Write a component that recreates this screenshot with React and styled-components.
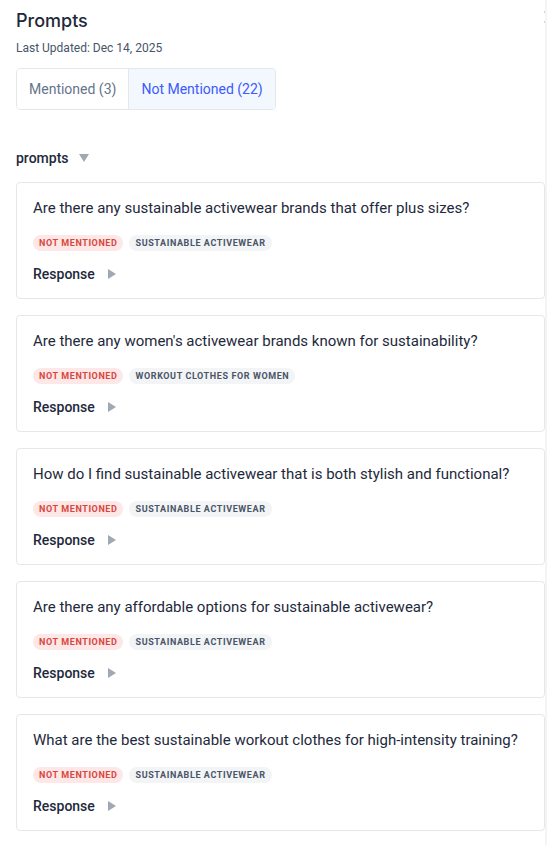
import React from 'react';
import styled, { createGlobalStyle } from 'styled-components';

const GlobalStyle = createGlobalStyle`
  html, body {
    margin: 0;
    padding: 0;
    background: #f4f4f5;
    font-family: Roboto, "Liberation Sans", Arial, sans-serif;
    -webkit-font-smoothing: antialiased;
  }
  * { box-sizing: border-box; }
`;

const prompts = [
  { question: 'Are there any sustainable activewear brands that offer plus sizes?', topic: 'Sustainable Activewear' },
  { question: "Are there any women's activewear brands known for sustainability?", topic: 'Workout Clothes for Women' },
  { question: 'How do I find sustainable activewear that is both stylish and functional?', topic: 'Sustainable Activewear' },
  { question: 'Are there any affordable options for sustainable activewear?', topic: 'Sustainable Activewear' },
  { question: 'What are the best sustainable workout clothes for high-intensity training?', topic: 'Sustainable Activewear' },
];

export default function App() {
  return (
    <>
      <GlobalStyle />
      <Panel>
        <Header>
          <Title>Prompts</Title>
          <Updated>Last Updated: Dec 14, 2025</Updated>
          <CloseButton aria-label="close">
            <svg width="14" height="14" viewBox="0 0 14 14" fill="none" stroke="#9ca3af" strokeWidth="1.5" strokeLinecap="round">
              <path d="M2 2l10 10M12 2L2 12" />
            </svg>
          </CloseButton>
        </Header>

        <Tabs>
          <Tab>Mentioned (3)</Tab>
          <Tab $active>Not Mentioned (22)</Tab>
        </Tabs>

        <GroupToggle>
          prompts
          <Caret viewBox="0 0 10 8">
            <path d="M0 0h10L5 8z" />
          </Caret>
        </GroupToggle>

        <List>
          {prompts.map((p) => (
            <Card key={p.question}>
              <Question>{p.question}</Question>
              <Tags>
                <Tag $variant="danger">Not Mentioned</Tag>
                <Tag>{p.topic}</Tag>
              </Tags>
              <ResponseToggle>
                Response
                <Caret viewBox="0 0 8 10" $small>
                  <path d="M0 0l8 5-8 5z" />
                </Caret>
              </ResponseToggle>
            </Card>
          ))}
        </List>
      </Panel>
    </>
  );
}

const Panel = styled.div`
  width: 545px;
  min-height: 845px;
  background: #ffffff;
  padding: 8px 0 13px 16px;
  overflow: hidden;
`;

const Header = styled.div`
  position: relative;
  display: flex;
  flex-direction: column;
`;

const Title = styled.h1`
  margin: 0;
  font-family: Inter, Roboto, sans-serif;
  font-size: 18px;
  line-height: 25px;
  font-weight: 500;
  color: #1e293b;
`;

const Updated = styled.div`
  margin-top: 7px;
  font-size: 12px;
  line-height: 16px;
  color: #475569;
`;

const CloseButton = styled.button`
  position: absolute;
  top: 2px;
  right: -12px;
  padding: 0;
  border: 0;
  background: none;
  display: flex;
`;

const Tabs = styled.div`
  display: inline-flex;
  align-self: flex-start;
  margin-top: 12px;
  border: 1px solid #e5e7eb;
  border-radius: 4px;
  overflow: hidden;
  width: fit-content;
`;

const Tab = styled.div`
  padding: 0 12px;
  height: 40px;
  display: flex;
  align-items: center;
  font-size: 14px;
  color: ${(p) => (p.$active ? '#3b5bfd' : '#64748b')};
  background: ${(p) => (p.$active ? '#f3f7fe' : '#ffffff')};
  border-left: ${(p) => (p.$active ? '1px solid #e5e7eb' : 'none')};
`;

const GroupToggle = styled.div`
  display: flex;
  align-items: center;
  gap: 10px;
  margin-top: 38px;
  font-size: 14px;
  line-height: 20px;
  font-weight: 500;
  color: #1e293b;
`;

const Caret = styled.svg`
  width: ${(p) => (p.$small ? '8px' : '10px')};
  height: ${(p) => (p.$small ? '10px' : '8px')};
  fill: #a0a8b4;
`;

const List = styled.div`
  display: flex;
  flex-direction: column;
  gap: 16px;
  margin-top: 14px;
`;

const Card = styled.div`
  width: 529px;
  border: 1px solid #e5e7eb;
  border-radius: 4px;
  padding: 15px 16px 14px;
  display: flex;
  flex-direction: column;
`;

const Question = styled.div`
  font-size: 15px;
  line-height: 20px;
  color: #1e293b;
`;

const Tags = styled.div`
  display: flex;
  gap: 6px;
  margin-top: 17px;
`;

const Tag = styled.span`
  height: 16px;
  padding: 0 6px;
  border-radius: 8px;
  display: inline-flex;
  align-items: center;
  font-size: 9px;
  font-weight: 700;
  letter-spacing: 0.6px;
  text-transform: uppercase;
  color: ${(p) => (p.$variant === 'danger' ? '#d9463e' : '#4a5568')};
  background: ${(p) => (p.$variant === 'danger' ? '#fde7e7' : '#f3f4f6')};
`;

const ResponseToggle = styled.div`
  display: flex;
  align-items: center;
  gap: 13px;
  margin-top: 13px;
  font-size: 14px;
  line-height: 20px;
  font-weight: 500;
  color: #1e293b;
`;
